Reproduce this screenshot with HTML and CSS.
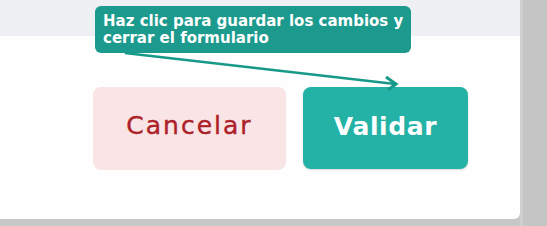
FILE: index.html
```html
<!DOCTYPE html>
<html lang="es">
<head>
<meta charset="utf-8">
<link rel="stylesheet" href="styles.css">
</head>
<body>
<div class="screen">
  <div class="panel">
    <div class="panel-head"></div>
    <div class="panel-foot">
      <button class="btn btn-cancel">Cancelar</button>
      <button class="btn btn-ok">Validar</button>
    </div>
  </div>
  <div class="side"></div>
  <div class="tip">Haz clic para guardar los cambios y cerrar el formulario</div>
  <svg class="arrow" width="547" height="226" viewBox="0 0 547 226">
    <line x1="125" y1="53" x2="395" y2="84" stroke="#17998a" stroke-width="2.5"/>
    <polyline points="386,77 396,84 388,90" fill="none" stroke="#17998a" stroke-width="3"/>
  </svg>
</div>
</body>
</html>
```
FILE: styles.css
```css
html, body {
  margin: 0;
  padding: 0;
}
body {
  width: 547px;
  height: 226px;
  overflow: hidden;
  background: #c7c7c7;
}
.screen {
  position: relative;
  display: flex;
  width: 547px;
  height: 226px;
}
.panel {
  width: 520px;
  height: 219px;
  background: #fefefe;
  border-bottom-right-radius: 6px;
  display: flex;
  flex-direction: column;
  overflow: hidden;
}
.panel-head {
  height: 36px;
  background: #eff0f4;
}
.panel-foot {
  display: flex;
  justify-content: flex-end;
  align-items: flex-start;
  gap: 17px;
  padding: 51px 52px 0 0;
}
.side {
  flex: 1;
  border-left: 3px solid #d0d0d0;
  background: #c5c5c5;
}
.btn {
  border: none;
  border-radius: 8px;
  font-family: "DejaVu Sans", "Lato", sans-serif;
  font-size: 25px;
  cursor: pointer;
  display: flex;
  align-items: center;
  justify-content: center;
  padding: 0 0 7px 0;
}
.btn-cancel {
  width: 193px;
  height: 83px;
  background: #fae5e6;
  color: #ad2129;
  font-weight: 400;
  letter-spacing: 2px;
  -webkit-text-stroke: 0.4px #ad2129;
}
.btn-ok {
  width: 165px;
  height: 82px;
  background: #23b2a5;
  color: #ffffff;
  font-weight: 700;
  letter-spacing: 0.6px;
  padding-bottom: 4px;
  box-shadow: 0 1px 2px rgba(0,0,0,0.15);
}
.tip {
  position: absolute;
  left: 95px;
  top: 6px;
  width: 316px;
  height: 47px;
  box-sizing: border-box;
  padding: 7px 2px 0 8px;
  background: #1b9a8d;
  border-radius: 6px;
  color: #ffffff;
  font-family: "DejaVu Sans", sans-serif;
  font-weight: 700;
  font-size: 15px;
  line-height: 17px;
}
.arrow {
  position: absolute;
  left: 0;
  top: 0;
  pointer-events: none;
}
```
